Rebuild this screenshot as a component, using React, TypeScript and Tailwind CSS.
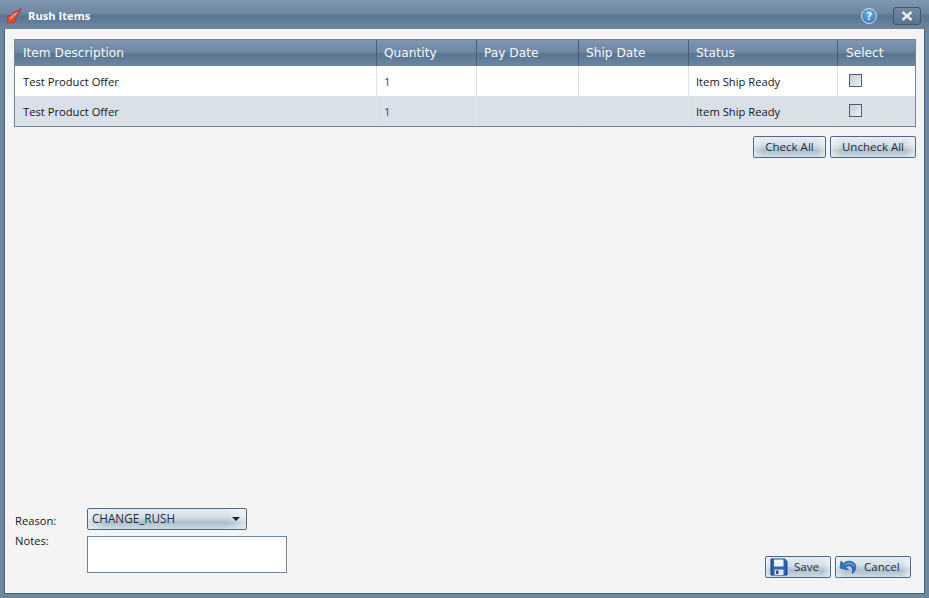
const columns = [
  { label: 'Item Description', width: 'w-[362px] pl-2' },
  { label: 'Quantity', width: 'w-[100px] pl-[7px]' },
  { label: 'Pay Date', width: 'w-[102px] pl-[7px]' },
  { label: 'Ship Date', width: 'w-[110px] pl-[7px]' },
  { label: 'Status', width: 'w-[149px] pl-[7px]' },
  { label: 'Select', width: 'flex-1 pl-2' },
];

const rows = [
  { name: 'Test Product Offer', qty: '1', status: 'Item Ship Ready' },
  { name: 'Test Product Offer', qty: '1', status: 'Item Ship Ready' },
];

const gloss =
  'rounded-[2px] border border-[#4f6a85] bg-[linear-gradient(to_right,#ffffff80_0%,#ffffff00_12%,#ffffff00_88%,#ffffff80_100%),linear-gradient(to_bottom,#e8edf1_0%,#d5dfe6_40%,#adc0cd_68%,#d0dbe3_100%)] text-[#1d2c3c]';
const btn = `${gloss} flex items-center text-[11.5px]`;

function Checkbox() {
  return <div className="h-[13px] w-[13px] border border-[#53606c] bg-[linear-gradient(135deg,#c4ccd6,#eef1f4)]" />;
}

function RushIcon() {
  return (
    <svg width="16" height="16" viewBox="0 0 16 16">
      <path d="M15 0 L14 5 L11.5 6 L10 9 L9.5 14 L1 15 L2 7 L6 8 L8 4 L11 3 Z" fill="#ee4526" stroke="#a8301c" strokeWidth="0.5" />
      <path d="M4 11 L8 7 L11 5" stroke="#fbb199" strokeWidth="1.3" fill="none" />
    </svg>
  );
}

function SaveIcon() {
  return (
    <svg width="18" height="18" viewBox="0 0 18 18">
      <path d="M1 1 H14.5 L17 3.5 V17 H1 Z" fill="#2a62b8" stroke="#173f80" />
      <rect x="4" y="1.5" width="9.5" height="7" fill="#f2f5f8" />
      <rect x="4.5" y="11.5" width="9" height="5.5" fill="#dfe5ea" />
      <rect x="6" y="12.5" width="2.5" height="3.5" fill="#2a4f88" />
    </svg>
  );
}

function UndoIcon() {
  return (
    <svg width="18" height="18" viewBox="0 0 18 18">
      <path d="M1 10 L2 3 L4.5 5.5 C8 2 14.5 2.5 16.5 7 C17.5 10 16 14 13 15.5 C14.5 12.5 13.5 9 11 8 C9.5 7.5 8 8 7 9.5 L9.5 12 Z" fill="#2f72c4" stroke="#1b4c8e" strokeWidth="0.7" />
      <path d="M6 6.5 C9 4.5 13 5 15 8" stroke="#8fc0ee" strokeWidth="1" fill="none" />
    </svg>
  );
}

export default function App() {
  return (
    <div className="flex h-[598px] w-[929px] flex-col border-x-4 border-b-4 border-[#6d87a1] font-['Open_Sans','Liberation_Sans',sans-serif] text-[11.2px] text-[#101820]">
      <div className="-mx-1 flex h-[29px] shrink-0 items-center bg-[linear-gradient(to_bottom,#7f97af_0%,#6f89a3_45%,#587691_55%,#6d87a1_100%)] pl-[6px] pr-2 pt-[3px]">
        <RushIcon />
        <span className="ml-[6px] text-[11.2px] font-bold text-white">Rush Items</span>
        <div className="ml-auto flex h-[16px] w-[16px] items-center justify-center rounded-full border border-[#cfe2f3] bg-[radial-gradient(circle_at_50%_30%,#6fb0e6,#2f74bb)] text-[11px] font-bold text-white">?</div>
        <div className="ml-[16px] flex h-[18px] w-[28px] items-center justify-center rounded-[3px] border border-[#3f566c] bg-[linear-gradient(to_bottom,#7189a1,#587691)]">
          <svg width="12" height="10" viewBox="0 0 12 10">
            <path d="M1.5 1 L10.5 9 M10.5 1 L1.5 9" stroke="#ececec" strokeWidth="2.4" />
          </svg>
        </div>
      </div>

      <div className="flex min-h-0 flex-1 flex-col border-x border-b border-[#46607a] bg-[#f4f4f4] pl-[9px] pr-[8px] pt-[10px]">
        <div className="border border-[#6d87a1]">
          <div className="flex h-[26px] bg-[linear-gradient(to_bottom,#7f97af_0%,#6f89a3_45%,#587691_55%,#6d87a1_100%)] font-['DejaVu_Sans',sans-serif] text-[12.2px] text-[#f6f9fb]">
            {columns.map((c) => (
              <div key={c.label} className={`${c.width} flex items-center border-r border-[#46607a] last:border-r-0`}>
                {c.label}
              </div>
            ))}
          </div>
          {rows.map((r, i) => (
            <div key={i} className={`flex h-[30px] ${i === 0 ? 'bg-white' : 'bg-[#dae0e7]'}`}>
              <div className="flex w-[362px] items-center border-r border-[#dde3ea] px-2 pt-[2px]">{r.name}</div>
              <div className="flex w-[100px] items-center border-r border-[#dde3ea] pl-[7px] pt-[2px] text-[#0f4a8a]">{r.qty}</div>
              <div className="w-[102px] border-r border-[#dde3ea]" />
              <div className="w-[110px] border-r border-[#dde3ea]" />
              <div className="flex w-[149px] items-center border-r border-[#dde3ea] pl-[7px] pt-[2px]">{r.status}</div>
              <div className="flex flex-1 items-start pl-[11px] pt-[8px]">
                <Checkbox />
              </div>
            </div>
          ))}
        </div>

        <div className="mt-[9px] flex justify-end gap-[4px]">
          <button className={`${btn} h-[22px] w-[73px] justify-center`}>Check All</button>
          <button className={`${btn} h-[22px] w-[86px] justify-center`}>Uncheck All</button>
        </div>

        <div className="mt-auto flex items-end justify-between pb-[15px]">
          <div className="mb-[5px] grid grid-cols-[73px_200px] gap-y-[6px]">
            <div className="self-center pl-[1px] pt-[5px]">Reason:</div>
            <div className={`${gloss} flex h-[22px] w-[160px] items-center justify-between pl-1 pr-[6px] text-[11.7px]`}>
              <span>CHANGE_RUSH</span>
              <span className="h-0 w-0 border-x-[4px] border-t-[4px] border-x-transparent border-t-[#222]" />
            </div>
            <div className="pl-[1px] leading-[9px]">Notes:</div>
            <div className="h-[37px] border border-[#6d87a1] bg-white" />
          </div>
          <div className="mr-[5px] flex gap-[4px]">
            <button className={`${btn} h-[22px] w-[66px] gap-[6px] pl-[4px]`}>
              <SaveIcon />
              Save
            </button>
            <button className={`${btn} h-[22px] w-[76px] gap-[7px] pl-[3px]`}>
              <UndoIcon />
              Cancel
            </button>
          </div>
        </div>
      </div>
    </div>
  );
}
